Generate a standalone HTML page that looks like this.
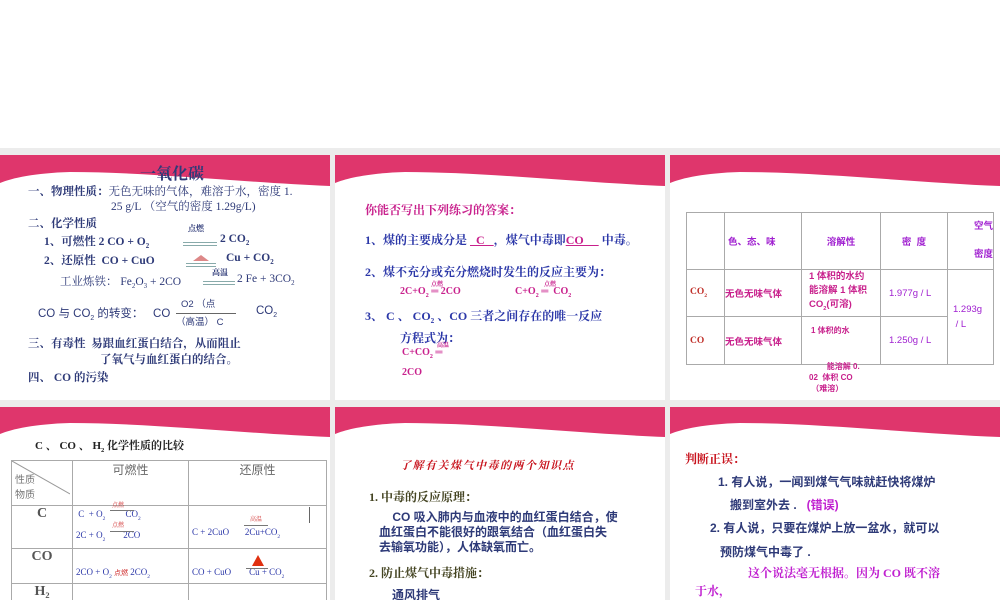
<!DOCTYPE html>
<html><head><meta charset="utf-8"><style>
body{margin:0;width:1000px;height:600px;overflow:hidden;background:#fff;position:relative;font-family:"Liberation Serif","Noto Serif CJK SC","Noto Sans CJK SC",serif}
.s{position:absolute;background:#fff;overflow:hidden}
.s svg.w{position:absolute;left:0;top:0}
.t{position:absolute;white-space:nowrap;font-weight:bold}
.sans{font-family:"Liberation Sans","Noto Sans CJK SC",sans-serif}
sub{font-size:60%;vertical-align:-3px}
.b1{color:#2e3a78}
.bl{color:#2b37a8}
.mg{color:#c8208c}
table{border-collapse:collapse;position:absolute}
td{border:1px solid #aaa;padding:0}
</style></head><body>
<div style="position:absolute;left:0;top:148px;width:1000px;height:452px;background:#ececec"></div>

<!-- slide 1 -->
<div class="s" style="left:0;top:155px;width:330px;height:245px">
<svg class="w" width="330" height="40"><path d="M0,0H330V31C250,28 150,17 70,17C35,18 12,23 0,28Z" fill="#df366c"/></svg>
<div class="t b1" style="left:140px;top:6px;font-size:16px">一氧化碳</div>
<div class="t b1" style="left:28px;top:30px;font-size:11.5px;line-height:15px">一、物理性质：<span style="font-weight:normal">无色无味的气体，难溶于水，密度 1.</span><br><span style="padding-left:83px;font-weight:normal">25 g/L （空气的密度 1.29g/L)</span></div>
<div class="t b1" style="left:28px;top:60px;font-size:11.5px">二、化学性质</div>
<div class="t b1" style="left:44px;top:78px;font-size:11.5px">1、可燃性 2 CO + O<sub>2</sub></div>
<div class="t b1" style="left:188px;top:68px;font-size:8px">点燃</div>
<div style="position:absolute;left:183px;top:87px;width:34px;border-top:1px solid #8aa;border-bottom:1px solid #8aa;height:2px"></div>
<div class="t b1" style="left:220px;top:78px;font-size:11.5px">2 CO<sub>2</sub></div>
<div class="t b1" style="left:44px;top:97px;font-size:11.5px">2、还原性 &nbsp;CO + CuO</div>
<div style="position:absolute;left:186px;top:108px;width:30px;border-top:1px solid #8aa;border-bottom:1px solid #8aa;height:2px"></div>
<div style="position:absolute;left:193px;top:100px;width:0;height:0;border-left:8px solid transparent;border-right:8px solid transparent;border-bottom:6px solid #d88"></div>
<div class="t b1" style="left:226px;top:97px;font-size:11.5px">Cu + CO<sub>2</sub></div>
<div class="t b1" style="left:60px;top:118px;font-size:11.5px;font-weight:normal">工业炼铁： Fe<sub>2</sub>O<sub>3</sub> + 2CO</div>
<div class="t b1" style="left:212px;top:112px;font-size:8px">高温</div>
<div style="position:absolute;left:203px;top:126px;width:32px;border-top:1px solid #8aa;border-bottom:1px solid #8aa;height:2px"></div>
<div class="t b1" style="left:237px;top:118px;font-size:11.5px;font-weight:normal">2 Fe + 3CO<sub>2</sub></div>
<div class="t b1 sans" style="left:38px;top:150px;font-size:11.5px;font-weight:normal">CO 与 CO<sub>2</sub> 的转变：&nbsp;&nbsp; CO</div>
<div class="t b1 sans" style="left:181px;top:141px;font-size:9.5px;font-weight:normal">O2 （点</div>
<div style="position:absolute;left:176px;top:158px;width:60px;border-top:1px solid #666"></div>
<div class="t b1 sans" style="left:176px;top:159px;font-size:9.5px;font-weight:normal">（高温） C</div>
<div class="t b1 sans" style="left:256px;top:150px;font-size:11.5px;font-weight:normal">CO<sub>2</sub></div>
<div class="t b1" style="left:28px;top:181px;font-size:11.5px;line-height:16px">三、有毒性 &nbsp;易跟血红蛋白结合，从而阻止<br><span style="padding-left:72px">了氧气与血红蛋白的结合。</span></div>
<div class="t b1" style="left:28px;top:214px;font-size:11.5px">四、 CO 的污染</div>
</div>

<!-- slide 2 -->
<div class="s" style="left:335px;top:155px;width:330px;height:245px">
<svg class="w" width="330" height="40"><path d="M0,0H330V31C250,28 150,17 70,17C35,18 12,23 0,28Z" fill="#df366c"/></svg>
<div class="t mg" style="left:30px;top:46px;font-size:12px">你能否写出下列练习的答案：</div>
<div class="t bl" style="left:30px;top:76px;font-size:12px">1、煤的主要成分是 <u style="color:#c8208c">&nbsp;&nbsp;C&nbsp;&nbsp;&nbsp;</u>，煤气中毒即<u style="color:#c8208c">CO&nbsp;&nbsp;&nbsp;&nbsp;&nbsp;</u> 中毒。</div>
<div class="t bl" style="left:30px;top:108px;font-size:12px">2、煤不充分或充分燃烧时发生的反应主要为：</div>
<div class="t mg" style="left:65px;top:131px;font-size:10px">2C+O<sub>2</sub> ═ 2CO</div>
<div class="t mg" style="left:96px;top:124px;font-size:6px">点燃</div>
<div class="t mg" style="left:180px;top:131px;font-size:10px">C+O<sub>2</sub> ═ &nbsp;CO<sub>2</sub></div>
<div class="t mg" style="left:209px;top:124px;font-size:6px">点燃</div>
<div class="t bl" style="left:30px;top:153px;font-size:12px;line-height:17px">3、 C 、 CO<sub>2</sub> 、CO 三者之间存在的唯一反应<br><span style="padding-left:35px">方程式为：</span></div>
<div class="t mg" style="left:67px;top:190px;font-size:10px;line-height:15px">C+CO<sub>2</sub> ═<br>2CO</div>
<div class="t mg" style="left:102px;top:185px;font-size:6px">高温</div>
</div>

<!-- slide 3 -->
<div class="s" style="left:670px;top:155px;width:330px;height:245px">
<svg class="w" width="330" height="40"><path d="M0,0H330V31C250,28 150,17 70,17C35,18 12,23 0,28Z" fill="#df366c"/></svg>
<table class="sans" style="left:16px;top:57px;font-size:9.5px;font-weight:bold;color:#a020d0">
<tr style="height:49px"><td style="width:37px"></td><td style="width:73px;padding-left:3px">色、态、味</td><td style="width:78px;text-align:center">溶解性</td><td style="width:66px;text-align:center">密&nbsp;&nbsp;度</td><td style="width:45px;text-align:right;line-height:28px">空气<br>密度</td></tr>
<tr style="height:46px"><td style="color:#c0302a;font-family:'Liberation Serif',serif;padding-left:3px">CO<sub>2</sub></td><td style="color:#c8208c">无色无味气体</td><td style="color:#c8208c;padding-left:7px;line-height:14px">1 体积的水约<br>能溶解 1 体积<br>CO<sub>2</sub>(可溶)</td><td style="padding-left:8px;font-weight:normal">1.977g / L</td><td rowspan="2" style="padding-left:5px;font-weight:normal;line-height:15px">1.293g<br>&nbsp;/ L</td></tr>
<tr style="height:48px"><td style="color:#c0302a;font-family:'Liberation Serif',serif;padding-left:3px">CO</td><td style="color:#c8208c">无色无味气体</td><td style="color:#c8208c;vertical-align:top;padding:8px 0 0 9px;font-size:8px">1 体积的水</td><td style="padding-left:8px;font-weight:normal">1.250g / L</td></tr>
</table>
<div class="t mg sans" style="left:139px;top:206px;font-size:8px;line-height:11px">&nbsp;&nbsp;&nbsp;&nbsp;&nbsp;&nbsp;&nbsp;&nbsp;能溶解 0.<br>02 &nbsp;体积 CO<br>&nbsp;（难溶）</div>
</div>

<!-- slide 4 -->
<div class="s" style="left:0;top:407px;width:330px;height:193px">
<svg class="w" width="330" height="40"><path d="M0,0H330V30C250,27 150,16 70,16C35,17 12,22 0,27Z" fill="#df366c"/></svg>
<div class="t" style="left:35px;top:30px;font-size:11px;color:#222">C 、 CO 、 H<sub>2</sub> 化学性质的比较</div>
<table style="left:11px;top:53px;font-family:'Liberation Sans','Noto Sans CJK SC',sans-serif;font-size:9px;color:#2b37a8">
<tr style="height:45px"><td style="width:57px;position:relative;color:#777;font-size:10px;line-height:15px;vertical-align:bottom;padding:0 0 2px 3px"><svg style="position:absolute;left:0;top:0" width="58" height="45"><line x1="0" y1="0" x2="58" y2="33" stroke="#999"/></svg>性质<br>物质</td><td style="width:115px;text-align:center;vertical-align:top;font-size:12px;color:#666">可燃性</td><td style="width:137px;text-align:center;vertical-align:top;font-size:12px;color:#666">还原性</td></tr>
<tr style="height:36px"><td style="text-align:center;vertical-align:top;font-weight:bold;font-size:14px;color:#555;font-family:'Liberation Serif',serif">C</td><td style="line-height:16px;padding-left:3px;font-family:'Liberation Serif',serif">&nbsp;C &nbsp;+ O<sub>2</sub> &nbsp;&nbsp;&nbsp;&nbsp;&nbsp;&nbsp;&nbsp;&nbsp;CO<sub>2</sub><br>2C + O<sub>2</sub> &nbsp;&nbsp;&nbsp;&nbsp;&nbsp;&nbsp;&nbsp;2CO</td><td style="padding:12px 0 0 3px;font-family:'Liberation Serif',serif">C + 2CuO &nbsp;&nbsp;&nbsp;&nbsp;&nbsp;&nbsp;2Cu+CO<sub>2</sub></td></tr>
<tr style="height:35px"><td style="text-align:center;vertical-align:top;font-weight:bold;font-size:14px;color:#555;font-family:'Liberation Serif',serif">CO</td><td style="padding:14px 0 0 3px;font-family:'Liberation Serif',serif">2CO + O<sub>2</sub> <span style="color:#d03030;font-size:7px">点燃</span> 2CO<sub>2</sub></td><td style="padding:14px 0 0 3px;font-family:'Liberation Serif',serif">CO + CuO &nbsp;&nbsp;&nbsp;&nbsp;&nbsp;&nbsp;&nbsp;Cu + CO<sub>2</sub></td></tr>
<tr style="height:30px"><td style="text-align:center;vertical-align:top;font-weight:bold;font-size:14px;color:#555;font-family:'Liberation Serif',serif">H<sub>2</sub></td><td style="padding:18px 0 0 3px">2H<sub>2</sub> + O<sub>2</sub></td><td style="padding:18px 0 0 3px">H<sub>2</sub> + CuO</td></tr>
</table>
<div class="t" style="left:112px;top:93px;font-size:6px;color:#d03030;font-weight:normal">点燃</div>
<div style="position:absolute;left:110px;top:103px;width:24px;border-top:1px solid #777"></div>
<div class="t" style="left:112px;top:113px;font-size:6px;color:#d03030;font-weight:normal">点燃</div>
<div style="position:absolute;left:110px;top:124px;width:24px;border-top:1px solid #777"></div>
<div class="t" style="left:250px;top:107px;font-size:6px;color:#d03030;font-weight:normal">高温</div>
<div style="position:absolute;left:244px;top:118px;width:24px;border-top:1px solid #777"></div>
<div style="position:absolute;left:309px;top:100px;height:16px;border-left:1px solid #666"></div>
<div style="position:absolute;left:252px;top:148px;width:0;height:0;border-left:6px solid transparent;border-right:6px solid transparent;border-bottom:11px solid #e03010"></div>
<div style="position:absolute;left:246px;top:161px;width:22px;border-top:1px solid #777"></div>
</div>

<!-- slide 5 -->
<div class="s" style="left:335px;top:407px;width:330px;height:193px">
<svg class="w" width="330" height="40"><path d="M0,0H330V30C250,27 150,16 70,16C35,17 12,22 0,27Z" fill="#df366c"/></svg>
<div class="t" style="left:65px;top:50px;font-size:11px;color:#c8141e;letter-spacing:1.5px;font-style:italic">了解有关煤气中毒的两个知识点</div>
<div class="t" style="left:34px;top:81px;font-size:12px;color:#444422">1. 中毒的反应原理：</div>
<div class="t b1 sans" style="left:44px;top:103px;font-size:12px;line-height:15px">&nbsp;&nbsp;&nbsp;&nbsp;CO 吸入肺内与血液中的血红蛋白结合，使<br>血红蛋白不能很好的跟氧结合（血红蛋白失<br>去输氧功能），人体缺氧而亡。</div>
<div class="t" style="left:34px;top:157px;font-size:12px;color:#444422">2. 防止煤气中毒措施：</div>
<div class="t b1 sans" style="left:57px;top:179px;font-size:12px">通风排气</div>
</div>

<!-- slide 6 -->
<div class="s" style="left:670px;top:407px;width:330px;height:193px">
<svg class="w" width="330" height="40"><path d="M0,0H330V30C250,27 150,16 70,16C35,17 12,22 0,27Z" fill="#df366c"/></svg>
<div class="t" style="left:15px;top:43px;font-size:12px;color:#c8141e">判断正误：</div>
<div class="t b1 sans" style="left:48px;top:66px;font-size:12px">1. 有人说，一闻到煤气气味就赶快将煤炉</div>
<div class="t b1 sans" style="left:60px;top:89px;font-size:12px">搬到室外去 . &nbsp;&nbsp;<span style="color:#c020d0">(错误)</span></div>
<div class="t b1 sans" style="left:40px;top:112px;font-size:12px">2. 有人说，只要在煤炉上放一盆水，就可以</div>
<div class="t b1 sans" style="left:50px;top:136px;font-size:12px">预防煤气中毒了 .</div>
<div class="t" style="left:78px;top:157px;font-size:12px;color:#c020d0">这个说法毫无根据。因为 CO 既不溶</div>
<div class="t" style="left:25px;top:175px;font-size:12px;color:#c020d0">于水，</div>
</div>
</body></html>
